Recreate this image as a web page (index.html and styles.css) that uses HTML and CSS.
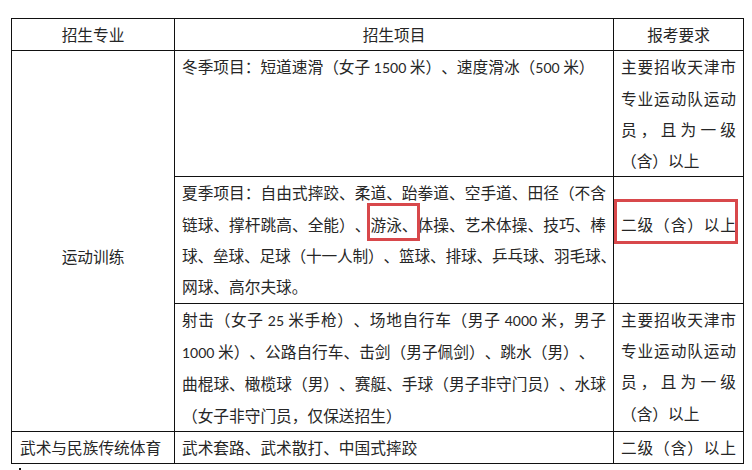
FILE: index.html
```
<!DOCTYPE html>
<html lang="zh-CN">
<head>
<meta charset="utf-8">
<title>招生专业</title>
<link rel="stylesheet" href="styles.css">
</head>
<body>
<div class="page">
  <table class="grid">
    <colgroup><col class="c1"><col class="c2"><col class="c3"></colgroup>
    <thead>
      <tr class="hrow"><th>招生专业</th><th>招生项目</th><th>报考要求</th></tr>
    </thead>
    <tbody>
      <tr class="row4">
        <td rowspan="3" class="major">运动训练</td>
        <td class="items"><span class="ln">冬季项目：短道速滑（女子 <span class="num">1500</span> 米）、速度滑冰（<span class="num">500</span> 米）</span></td>
        <td class="req"><span class="jl">主要招收天津市</span><span class="jl">专业运动队运动</span><span class="jl">员，且为一级</span><span class="ln">（含）以上</span></td>
      </tr>
      <tr class="row4">
        <td class="items"><span class="jl">夏季项目：自由式摔跤、柔道、跆拳道、空手道、田径（不含</span><span class="jl">链球、撑杆跳高、全能）、<span class="hl">游泳、</span>体操、艺术体操、技巧、棒</span><span class="jl hang">球、垒球、足球（十一人制）、篮球、排球、乒乓球、羽毛球、</span><span class="ln">网球、高尔夫球。</span></td>
        <td class="req"><span class="ln">&nbsp;</span><span class="jl hl2">二级（含）以上</span></td>
      </tr>
      <tr class="row4b">
        <td class="items"><span class="jl">射击（女子 <span class="num">25</span> 米手枪）、场地自行车（男子 <span class="num">4000</span> 米，男子</span><span class="ln"><span class="num">1000</span> 米）、公路自行车、击剑（男子佩剑）、跳水（男）、</span><span class="jl">曲棍球、橄榄球（男）、赛艇、手球（男子非守门员）、水球</span><span class="ln">（女子非守门员，仅保送招生）</span></td>
        <td class="req"><span class="jl">主要招收天津市</span><span class="jl">专业运动队运动</span><span class="jl">员，且为一级</span><span class="ln">（含）以上</span></td>
      </tr>
      <tr class="row1">
        <td class="wushu">武术与民族传统体育</td>
        <td class="items">武术套路、武术散打、中国式摔跤</td>
        <td class="req"><span class="jl">二级（含）以上</span></td>
      </tr>
    </tbody>
  </table>
  <div class="caret"></div>
</div>
</body>
</html>
```
FILE: styles.css
```
html, body {
  margin: 0;
  padding: 0;
  background: #ffffff;
}
.page {
  padding: 18px 0 0 11px;
  font-family: "Noto Sans CJK SC", "Noto Sans", sans-serif;
  font-size: 15.7px;
  color: #262626;
  text-spacing-trim: space-all;
}
.grid {
  border-collapse: collapse;
  table-layout: fixed;
  width: 732px;
}
.c1 { width: 163px; }
.c2 { width: 439px; }
.c3 { width: 130px; }
.grid th,
.grid td {
  border: 1px solid #111;
  padding: 0 7px;
  line-height: 31.3px;
  vertical-align: top;
  text-align: left;
  font-weight: normal;
  white-space: nowrap;
}
.grid th {
  text-align: center;
  height: 31px;
}
.row4 td, .row4b td { height: 125px; }
.row1 td { height: 30px; }
.grid td.major {
  text-align: center;
  vertical-align: middle;
  padding-top: 32px;
}
.grid td.wushu {
  padding-left: 8px;
}
.ln, .jl {
  display: block;
}
.jl {
  text-align: justify;
  text-align-last: justify;
}
.hang {
  letter-spacing: -0.25px;
  margin-right: -10px;
}
.num {
  font-family: "Lato", "Liberation Sans", sans-serif;
  font-size: 14px;
  letter-spacing: 0;
}
.hl, .hl2 {
  position: relative;
}
.hl::after {
  content: "";
  position: absolute;
  left: -3px;
  right: -2px;
  top: -10px;
  bottom: -5px;
  border: 3px solid #d8484b;
}
.hl2::after {
  content: "";
  position: absolute;
  left: -7px;
  right: -2px;
  top: -10px;
  bottom: -4px;
  border: 3px solid #d8484b;
}
.caret {
  width: 2px;
  height: 8px;
  margin: 4px 0 0 8px;
  background: #111;
}
```
